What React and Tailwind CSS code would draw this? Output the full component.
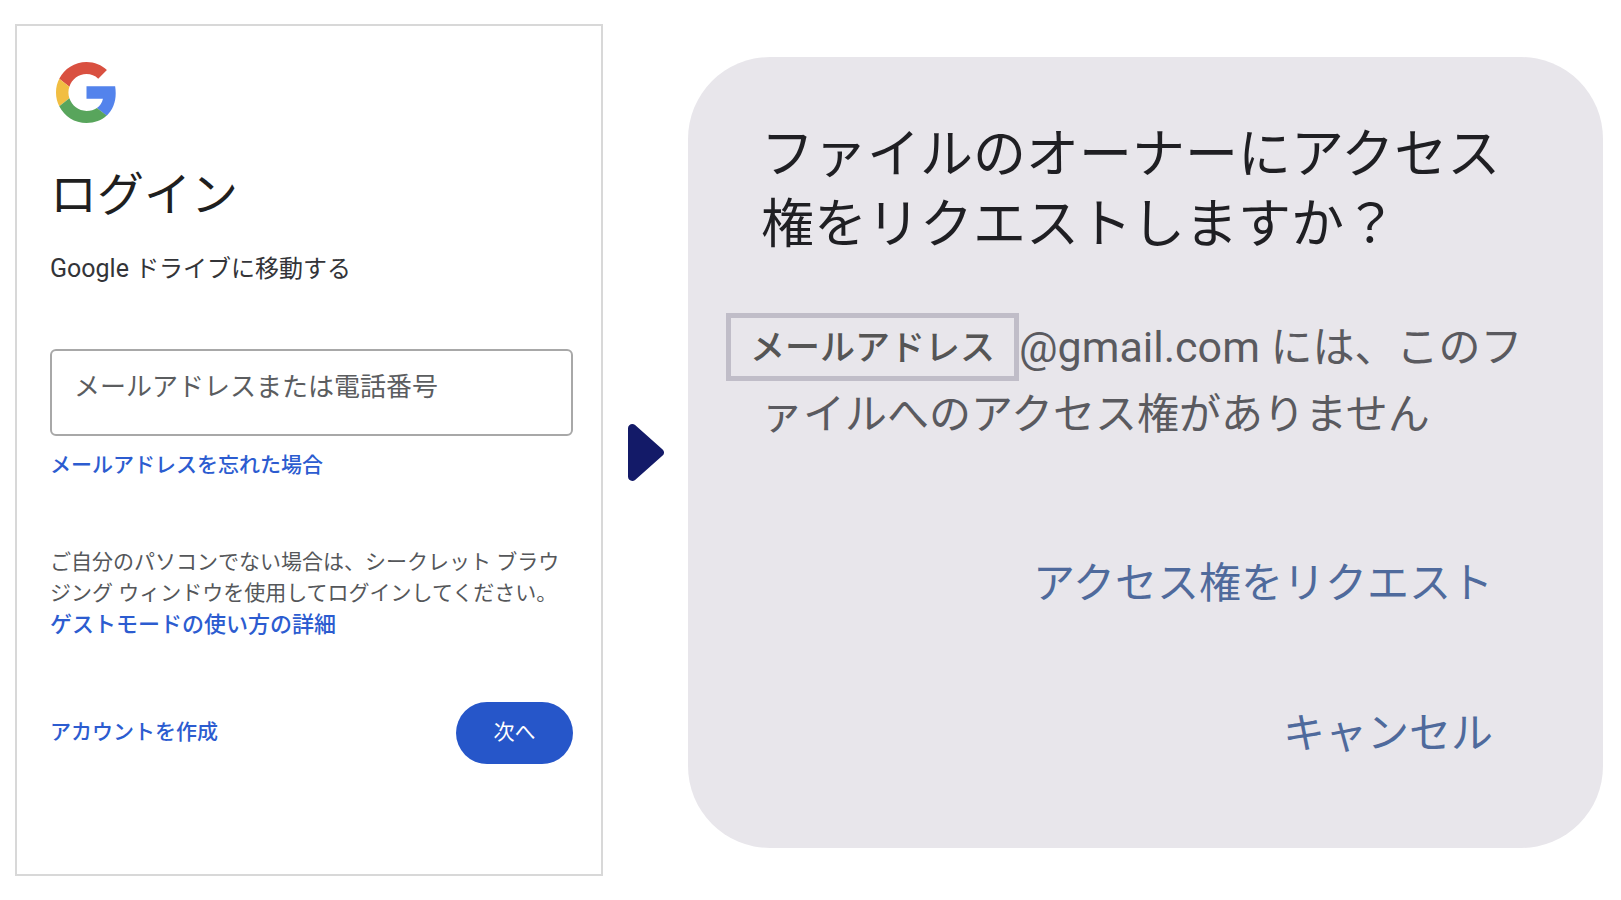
import React from 'react';

function GoogleLogo() {
  return (
    <svg viewBox="0 0 48 48" className="ml-[6px] h-[61px] w-[61px]" aria-label="Google" role="img">
      <path fill="#d95040" d="M24 9.5c3.54 0 6.71 1.22 9.21 3.6l6.85-6.85C35.9 2.38 30.47 0 24 0 14.62 0 6.51 5.38 2.56 13.22l7.98 6.19C12.43 13.72 17.74 9.5 24 9.5z" />
      <path fill="#5383ec" d="M46.98 24.55c0-1.87-.15-3.69-.44-5.55H24v9.9h12.94c-.58 2.96-2.26 5.6-4.78 7.3l7.73 6c4.51-4.18 7.09-10.36 7.09-17.65z" />
      <path fill="#f1be42" d="M10.53 28.59c-.48-1.45-.76-2.99-.76-4.59s.27-3.14.76-4.59l-7.98-6.19C.92 16.46 0 20.12 0 24c0 3.88.92 7.54 2.56 10.78l7.97-6.19z" />
      <path fill="#58a55c" d="M24 48c6.48 0 11.93-2.13 15.89-5.81l-7.73-6c-2.15 1.45-4.92 2.3-8.16 2.3-6.26 0-11.57-4.22-13.47-9.91l-7.98 6.19C6.51 42.62 14.62 48 24 48z" />
    </svg>
  );
}

function LoginCard() {
  return (
    <section className="border-2 border-[#d8d8d8] bg-white pt-9 pr-7 pb-[110px] pl-[33px] text-[21px]">
      <GoogleLogo />
      <h1 className="mt-[42px] text-[47px] leading-[60px] text-[#1f1f1f]">ログイン</h1>
      <p className="mt-[26px] text-[24px] leading-9 text-[#333438]">
        <span className="text-[25px]">Google </span>ドライブに移動する
      </p>

      <input
        type="text"
        aria-label="メールアドレスまたは電話番号"
        placeholder="メールアドレスまたは電話番号"
        className="mt-[62px] block h-[87px] w-full rounded-md border-2 border-[#a8a8a8] bg-white px-[22px] pb-3 text-[26px] text-[#444746] placeholder:text-[#5b5d5f] placeholder:opacity-100"
      />
      <a href="#forgot" className="mt-[14px] block leading-[30px] font-medium text-[#2c5cd0]">
        メールアドレスを忘れた場合
      </a>

      <p className="mt-[67px] leading-[31px] whitespace-nowrap text-[#55575a]">
        ご自分のパソコンでない場合は、シークレット ブラウ
        <br />
        ジング ウィンドウを使用してログインしてください。
        <br />
        <a href="#guest" className="text-[22px] font-medium text-[#2c5cd0]">ゲストモードの使い方の詳細</a>
      </p>

      <div className="mt-[61px] flex items-center justify-between">
        <a href="#create" className="font-medium text-[#2c5cd0]">アカウントを作成</a>
        <button type="button" className="h-[62px] w-[117px] rounded-full bg-[#2656c9] text-white">
          次へ
        </button>
      </div>
    </section>
  );
}

function Arrow() {
  return (
    <svg viewBox="0 0 36 57" className="h-[57px] w-9" aria-hidden="true">
      <path fill="#131a68" d="M0 4.2C0 .6 4.4-1.3 7.1 1.1L34.6 25.4C36.5 27.1 36.5 29.9 34.6 31.6L7.1 55.9C4.4 58.3 0 56.4 0 52.8Z" />
    </svg>
  );
}

function AccessCard() {
  return (
    <section className="rounded-[82px] bg-[#e8e6eb] pt-[63px] pb-[84px] pl-[38px] whitespace-nowrap">
      <h2 className="pl-[35px] text-[53px] leading-[70px] text-[#1f1f23]">
        ファイルのオーナーにアクセス
        <br />
        権をリクエストしますか？
      </h2>

      <div className="mt-[53px] text-[#5a5a5f]">
        <p className="flex items-center">
          <span className="flex h-[68px] w-[293px] items-center justify-center border-[5px] border-[#c0bdc8] pt-1 text-[35px] font-medium text-[#555555]">
            メールアドレス
          </span>
          <span className="text-[42px] leading-[62px]">
            <span className="text-[43px]">@gmail.com </span>には、このフ
          </span>
        </p>
        <p className="pl-[35px] text-[42px] leading-[68px]">ァイルへのアクセス権がありません</p>
      </div>

      <div className="mt-[105px] flex flex-col items-end gap-[90px] pr-[110px] text-[42px] leading-[60px] text-[#4f6a9c]">
        <button type="button">アクセス権をリクエスト</button>
        <button type="button">キャンセル</button>
      </div>
    </section>
  );
}

export default function App() {
  return (
    <main className="grid min-h-screen grid-cols-[588fr_85fr_915fr] items-start bg-white pt-6 pr-[18px] pb-6 pl-[15px] font-[Roboto,'Noto_Sans_CJK_JP',sans-serif]">
      <LoginCard />
      <div className="flex justify-center self-center pt-1">
        <Arrow />
      </div>
      <div className="pt-[33px]">
        <AccessCard />
      </div>
    </main>
  );
}
